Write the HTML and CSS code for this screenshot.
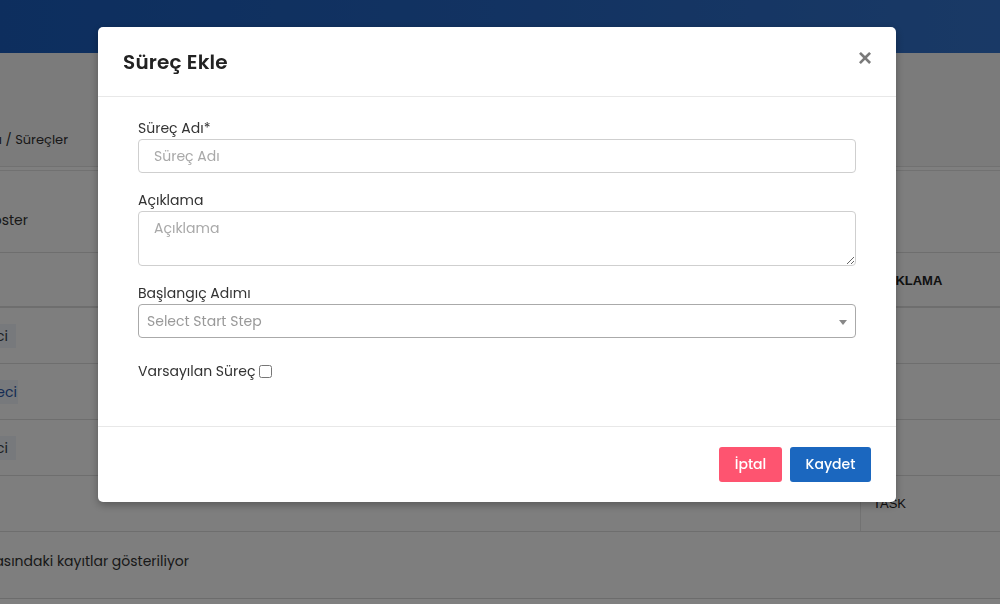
FILE: index.html
```html
<!DOCTYPE html>
<html lang="tr">
<head>
<meta charset="utf-8">
<title>Süreçler</title>
<link rel="stylesheet" href="styles.css">
</head>
<body>
<div class="page">
  <header class="topbar"></header>
  <div class="crumbs"><span class="clip crumb-clip"><span>Süreç Tanımları / Süreçler</span></span></div>
  <section class="card">
    <div class="toolbar"><span class="clip len-clip"><span class="len">Kayıt göster</span></span></div>
    <div class="table">
      <div class="tr th">
        <div class="td name"></div>
        <div class="td desc">AÇIKLAMA</div>
      </div>
      <div class="tr">
        <div class="td name"><span class="clip tag-clip"><a class="tag">İzin Süreci</a></span></div>
        <div class="td desc"></div>
      </div>
      <div class="tr">
        <div class="td name"><span class="clip tag-clip wide"><a class="tag link">Satın Alma Süreci</a></span></div>
        <div class="td desc"></div>
      </div>
      <div class="tr">
        <div class="td name"><span class="clip tag-clip"><a class="tag">Onay Süreci</a></span></div>
        <div class="td desc"></div>
      </div>
      <div class="tr">
        <div class="td name"></div>
        <div class="td desc">TASK</div>
      </div>
    </div>
    <div class="info"><span class="clip info-clip"><span>1 - 4 arasındaki kayıtlar gösteriliyor</span></span></div>
  </section>
</div>

<div class="overlay">
  <div class="modal">
    <div class="modal-header">
      <h4 class="modal-title">Süreç Ekle</h4>
      <span class="close">×</span>
    </div>
    <div class="modal-body">
      <div class="form-group">
        <label class="label">Süreç Adı*</label>
        <input class="control" type="text" placeholder="Süreç Adı">
      </div>
      <div class="form-group">
        <label class="label">Açıklama</label>
        <textarea class="control area" placeholder="Açıklama"></textarea>
      </div>
      <div class="form-group">
        <label class="label">Başlangıç Adımı</label>
        <div class="select">
          <span class="select-text">Select Start Step</span>
          <span class="arrow"></span>
        </div>
      </div>
      <div class="check-row">
        <label class="label inline">Varsayılan Süreç</label>
        <input class="check" type="checkbox">
      </div>
    </div>
    <div class="modal-footer">
      <button class="btn btn-cancel">İptal</button>
      <button class="btn btn-save">Kaydet</button>
    </div>
  </div>
</div>
</body>
</html>
```

FILE: styles.css
```css
* { box-sizing: border-box; }

html, body {
  margin: 0;
  padding: 0;
  height: 100%;
  overflow: hidden;
}

body {
  background: #ffffff;
  font-family: "Poppins", "Open Sans", "Noto Sans", sans-serif;
  color: #333;
}

.page {
  display: flex;
  flex-direction: column;
}

.topbar {
  height: 53px;
  background: linear-gradient(90deg, #1a5dbd 0%, #2566c4 50%, #3373cc 100%);
}

.clip {
  display: flex;
  justify-content: flex-end;
  white-space: nowrap;
}

.crumbs {
  height: 114px;
  padding-top: 77px;
  background: #f7f7f7;
  border-bottom: 1px solid #e2e2e2;
  font-size: 13px;
  line-height: 20px;
  color: #333;
}

.crumb-clip { width: 68px; }

.card {
  margin-top: 3px;
  border-top: 1px solid #e2e2e2;
  background: #fcfcfc;
}

.toolbar {
  height: 82px;
  padding-top: 39px;
  font-size: 14px;
  line-height: 20px;
  color: #333;
  border-bottom: 1px solid #dcdcdc;
}

.len-clip { width: 28px; }

.table {
  display: flex;
  flex-direction: column;
}

.tr {
  display: flex;
  height: 56px;
  border-bottom: 1px solid #dcdcdc;
}

.th {
  height: 55px;
  border-bottom-width: 2px;
}

.td {
  display: flex;
  align-items: center;
}

.name { flex: 1; }

.desc {
  width: 140px;
  padding-left: 12px;
  border-left: 1px solid #e4e4e4;
  font-family: "Liberation Sans", Arial, sans-serif;
  font-size: 13px;
  color: #222;
}

.th .desc { font-weight: 700; padding-top: 2px; }

.tag-clip { width: 16px; }
.tag-clip.wide { width: 18px; }

.tag {
  display: block;
  padding: 2px 8px 2px 0;
  background: #eef2f8;
  color: #3a3f48;
  font-size: 14px;
  line-height: 20px;
  text-decoration: none;
}

.tag.link {
  color: #2a57a8;
  padding-right: 1px;
}

.info {
  height: 67px;
  padding-top: 19px;
  font-size: 14px;
  line-height: 20px;
  color: #333;
  border-bottom: 1px solid #d8d8d8;
}

.info-clip { width: 189px; }

/* modal */
.overlay {
  position: fixed;
  inset: 0;
  background: rgba(0, 0, 0, 0.5);
  padding: 27px 0 0 98px;
}

.modal {
  width: 798px;
  background: #fff;
  border-radius: 5px;
  box-shadow: 0 3px 9px rgba(0, 0, 0, 0.3);
  display: flex;
  flex-direction: column;
}

.modal-header {
  display: flex;
  align-items: center;
  justify-content: space-between;
  height: 70px;
  padding: 0 25px 0 25px;
  border-bottom: 1px solid #e8e8e8;
}

.modal-title {
  margin: 0;
  font-size: 20px;
  font-weight: 600;
  color: #222;
  letter-spacing: 0.2px;
  padding-top: 1px;
}

.close {
  font-family: "Liberation Sans", Arial, sans-serif;
  font-size: 24px;
  font-weight: 700;
  line-height: 1;
  color: #7a7a7a;
  margin-top: -8px;
  margin-right: -1px;
}

.modal-body {
  padding: 21px 40px 0 40px;
  height: 329px;
  display: flex;
  flex-direction: column;
}

.form-group {
  display: flex;
  flex-direction: column;
  margin-bottom: 17px;
}

.label {
  font-size: 14px;
  line-height: 21px;
  color: #333;
}

.control {
  display: block;
  width: 100%;
  height: 34px;
  border: 1px solid #cfcfcf;
  border-radius: 4px;
  padding: 6px 15px;
  font-family: inherit;
  font-size: 14px;
  color: #333;
  outline: none;
}

.control::placeholder { color: #a9a9a9; }

.area {
  height: 55px;
  resize: vertical;
  line-height: 21px;
  padding-top: 6px;
}

.select {
  display: flex;
  align-items: center;
  justify-content: space-between;
  height: 34px;
  border: 1px solid #aaa;
  border-radius: 4px;
  padding: 0 8px 0 8px;
}

.select-text {
  font-size: 14px;
  color: #999;
  padding-top: 1px;
}

.arrow {
  width: 0;
  height: 0;
  border-style: solid;
  border-width: 5px 4px 0 4px;
  border-color: #888 transparent transparent transparent;
  margin-top: 2px;
}

.check-row {
  display: flex;
  align-items: center;
  margin-top: 6px;
}

.check {
  width: 13px;
  height: 13px;
  margin: 0 0 0 4px;
}

.modal-footer {
  display: flex;
  justify-content: flex-end;
  gap: 8px;
  padding: 20px 25px 20px 25px;
  border-top: 1px solid #e8e8e8;
}

.btn {
  height: 35px;
  border: none;
  border-radius: 3px;
  font-family: inherit;
  font-size: 14px;
  font-weight: 500;
  color: #fff;
  padding: 0;
}

.btn-cancel { background: #fe5470; width: 63px; }
.btn-save { background: #1b67bf; width: 81px; }
```
